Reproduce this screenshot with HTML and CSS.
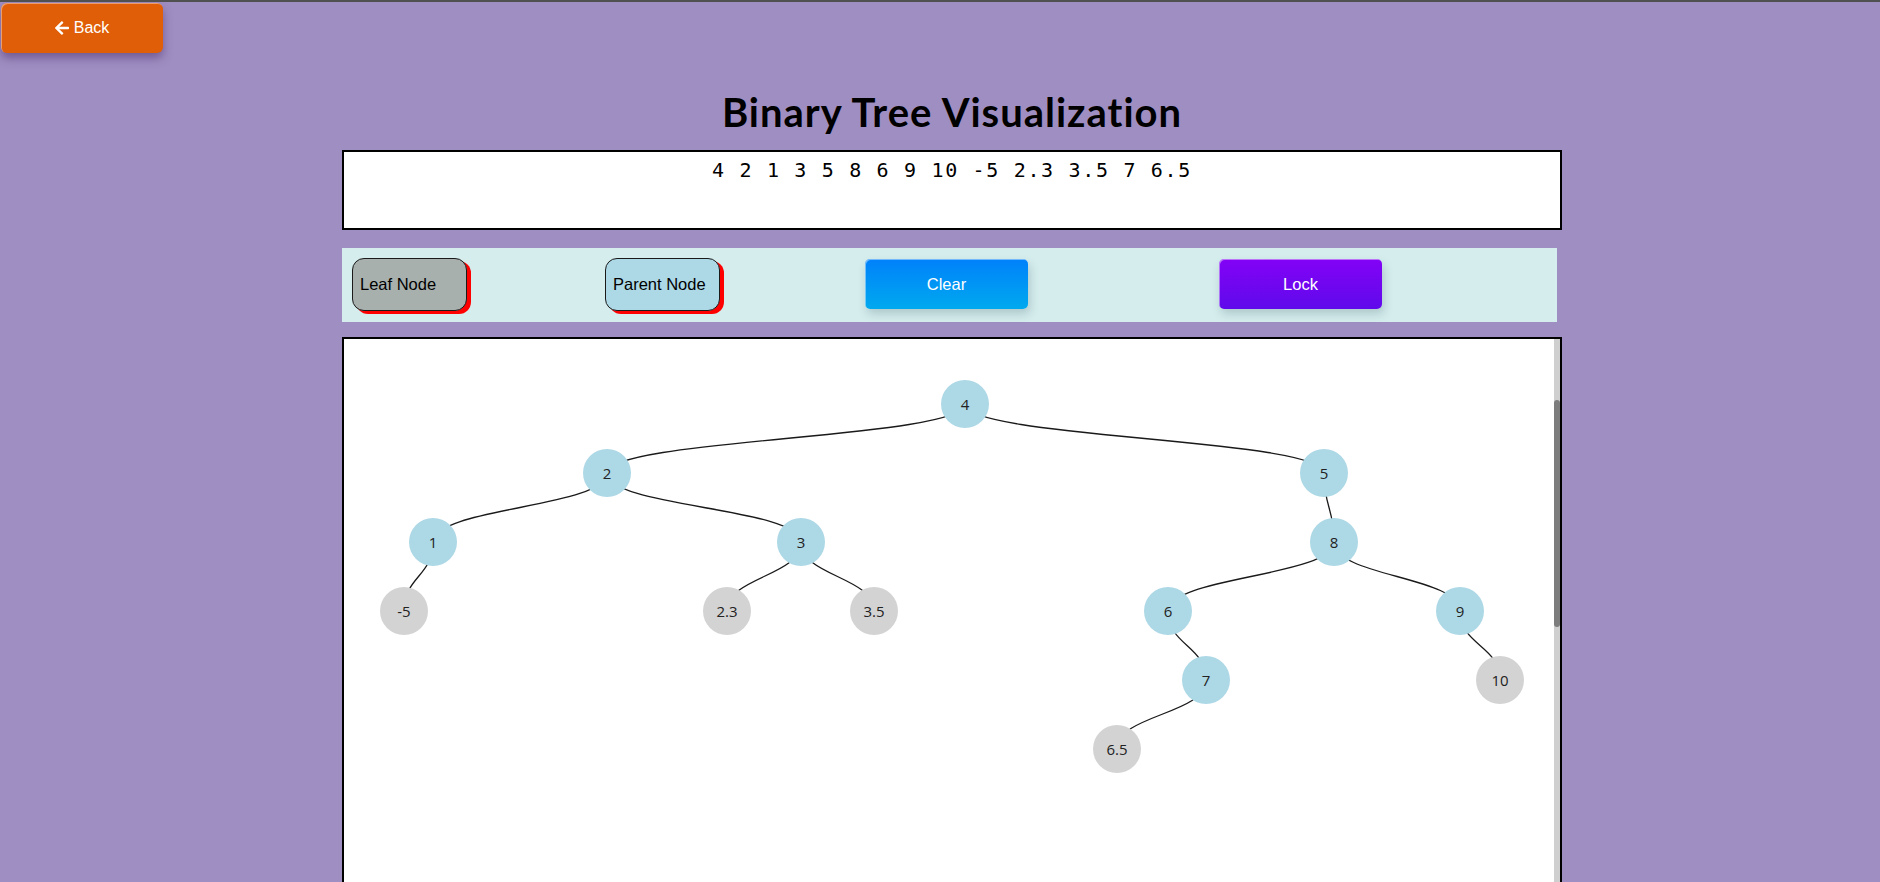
FILE: index.html
```html
<!DOCTYPE html>
<html lang="en">
<head>
<meta charset="utf-8">
<title>Binary Tree Visualization</title>
<link rel="stylesheet" href="styles.css">
</head>
<body>
<header class="topbar">
  <button class="back-btn">
    <svg class="back-icon" viewBox="0 0 448 512" aria-hidden="true"><path d="M257.5 445.1l-22.2 22.2c-9.4 9.4-24.6 9.4-33.9 0L7 273c-9.4-9.4-9.4-24.6 0-33.9L201.4 44.7c9.4-9.4 24.6-9.4 33.9 0l22.2 22.2c9.5 9.5 9.3 25-.4 34.3L136.6 216H424c13.3 0 24 10.7 24 24v32c0 13.3-10.7 24-24 24H136.6l120.5 114.8c9.8 9.3 10 24.8.4 34.3z"/></svg>
    <span>Back</span>
  </button>
</header>
<main class="main">
  <h1 class="title">Binary Tree Visualization</h1>
  <textarea class="values" spellcheck="false">4 2 1 3 5 8 6 9 10 -5 2.3 3.5 7 6.5</textarea>
  <div class="controls">
    <button class="legend leaf">Leaf Node</button>
    <button class="legend parent">Parent Node</button>
    <button class="action clear">Clear</button>
    <button class="action lock">Lock</button>
  </div>
  <div class="tree-box">
    <svg class="tree" width="1210" height="1405" viewBox="0 0 1210 1405">
      <g class="links">
        <path d="M621,65 C621,99.5 263,99.5 263,134"/>
        <path d="M621,65 C621,99.5 980,99.5 980,134"/>
        <path d="M263,134 C263,168.5 89,168.5 89,203"/>
        <path d="M263,134 C263,168.5 457,168.5 457,203"/>
        <path d="M89,203 C89,237.5 60,237.5 60,272"/>
        <path d="M457,203 C457,237.5 383,237.5 383,272"/>
        <path d="M457,203 C457,237.5 530,237.5 530,272"/>
        <path d="M980,134 C980,168.5 990,168.5 990,203"/>
        <path d="M990,203 C990,237.5 824,237.5 824,272"/>
        <path d="M990,203 C990,237.5 1116,237.5 1116,272"/>
        <path d="M824,272 C824,306.5 862,306.5 862,341"/>
        <path d="M1116,272 C1116,306.5 1156,306.5 1156,341"/>
        <path d="M862,341 C862,375.5 773,375.5 773,410"/>
      </g>
      <g class="nodes">
        <circle class="inner" cx="621" cy="65" r="24"/><text x="621" y="65">4</text>
        <circle class="inner" cx="263" cy="134" r="24"/><text x="263" y="134">2</text>
        <circle class="inner" cx="980" cy="134" r="24"/><text x="980" y="134">5</text>
        <circle class="inner" cx="89" cy="203" r="24"/><text x="89" y="203">1</text>
        <circle class="inner" cx="457" cy="203" r="24"/><text x="457" y="203">3</text>
        <circle class="inner" cx="990" cy="203" r="24"/><text x="990" y="203">8</text>
        <circle class="leafc" cx="60" cy="272" r="24"/><text x="60" y="272">-5</text>
        <circle class="leafc" cx="383" cy="272" r="24"/><text x="383" y="272">2.3</text>
        <circle class="leafc" cx="530" cy="272" r="24"/><text x="530" y="272">3.5</text>
        <circle class="inner" cx="824" cy="272" r="24"/><text x="824" y="272">6</text>
        <circle class="inner" cx="1116" cy="272" r="24"/><text x="1116" y="272">9</text>
        <circle class="inner" cx="862" cy="341" r="24"/><text x="862" y="341">7</text>
        <circle class="leafc" cx="1156" cy="341" r="24"/><text x="1156" y="341">10</text>
        <circle class="leafc" cx="773" cy="410" r="24"/><text x="773" y="410">6.5</text>
      </g>
    </svg>
    <div class="rail"><div class="thumb"></div></div>
  </div>
</main>
</body>
</html>
```
FILE: styles.css
```css
html {
  margin: 0;
  overflow: hidden;
}
body {
  margin: 0;
  height: 880px;
  overflow: hidden;
  background: #9f8ec2;
  border-top: 2px solid #505050;
  font-family: "Liberation Sans", Arial, sans-serif;
}
.topbar {
  display: flex;
  height: 51px;
}
.back-btn {
  margin: 1px 0 0 1px;
  width: 162px;
  height: 50px;
  display: flex;
  align-items: center;
  justify-content: center;
  gap: 5px;
  background: #e05e07;
  color: #fff;
  border: none;
  border-radius: 6px;
  font-family: "Liberation Sans", Arial, sans-serif;
  font-size: 16px;
  box-shadow: 0 5px 10px rgba(70, 40, 100, 0.5), inset 1px 1px 0 rgba(255, 255, 255, 0.4);
  padding: 0;
}
.back-icon {
  width: 14px;
  height: 16px;
  fill: #fff;
}
.main {
  margin-left: 342px;
  width: 1220px;
}
.title {
  margin: 35px 0 14px;
  font-family: Lato, "Open Sans", sans-serif;
  font-weight: 700;
  font-size: 40px;
  letter-spacing: 1px;
  line-height: 48px;
  text-align: center;
  color: #000;
}
.values {
  display: block;
  box-sizing: border-box;
  width: 1220px;
  height: 80px;
  margin: 0;
  border: 2px solid #000;
  padding: 5px 4px 0;
  resize: none;
  background: #fff;
  color: #000;
  font-family: "DejaVu Sans Mono", "Liberation Mono", monospace;
  font-size: 20px;
  letter-spacing: 1.67px;
  line-height: 26px;
  text-align: center;
  outline: none;
}
.controls {
  display: flex;
  align-items: flex-start;
  box-sizing: border-box;
  width: 1215px;
  height: 74px;
  margin-top: 18px;
  padding: 10px;
  background: #d5eded;
}
.legend {
  box-sizing: border-box;
  width: 115px;
  height: 53px;
  padding: 0 0 0 7px;
  border: 1px solid #1a1a1a;
  border-radius: 12px;
  box-shadow: 4px 3px 0 #ff0000;
  text-align: left;
  color: #000;
  font-family: "Liberation Sans", Arial, sans-serif;
  font-size: 16.5px;
}
.leaf {
  background: #a8b0ad;
}
.parent {
  margin-left: 138px;
  background: #add8e6;
}
.action {
  box-sizing: border-box;
  width: 163px;
  height: 50px;
  margin-top: 1px;
  border: none;
  border-radius: 5px;
  color: #fff;
  font-family: "Liberation Sans", Arial, sans-serif;
  font-size: 16.5px;
  box-shadow: 2px 5px 10px rgba(40, 70, 80, 0.22), inset 1px 1px 0 rgba(255, 255, 255, 0.45);
}
.clear {
  margin-left: 145px;
  background: linear-gradient(#0081fb, #00a9ee);
}
.lock {
  margin-left: 191px;
  background: linear-gradient(#8302f6, #5f0aeb);
}
.tree-box {
  display: flex;
  box-sizing: border-box;
  width: 1220px;
  height: 600px;
  margin-top: 15px;
  border: 2px solid #000;
  background: #fff;
  overflow: hidden;
}
.tree {
  display: block;
  flex: 1 1 auto;
}
.links path {
  fill: none;
  stroke: #1a1a1a;
  stroke-width: 1.3;
}
.nodes .inner {
  fill: #add8e6;
}
.nodes .leafc {
  fill: #d3d3d3;
}
.nodes text {
  font-family: "Open Sans", "Noto Sans", sans-serif;
  font-size: 15px;
  fill: #222;
  text-anchor: middle;
  dominant-baseline: central;
}
.rail {
  flex: 0 0 6px;
  box-sizing: border-box;
  padding-top: 61px;
  background: #cfcfcf;
}
.thumb {
  height: 227px;
  border-radius: 3px;
  background: #7d7d7d;
}
```
